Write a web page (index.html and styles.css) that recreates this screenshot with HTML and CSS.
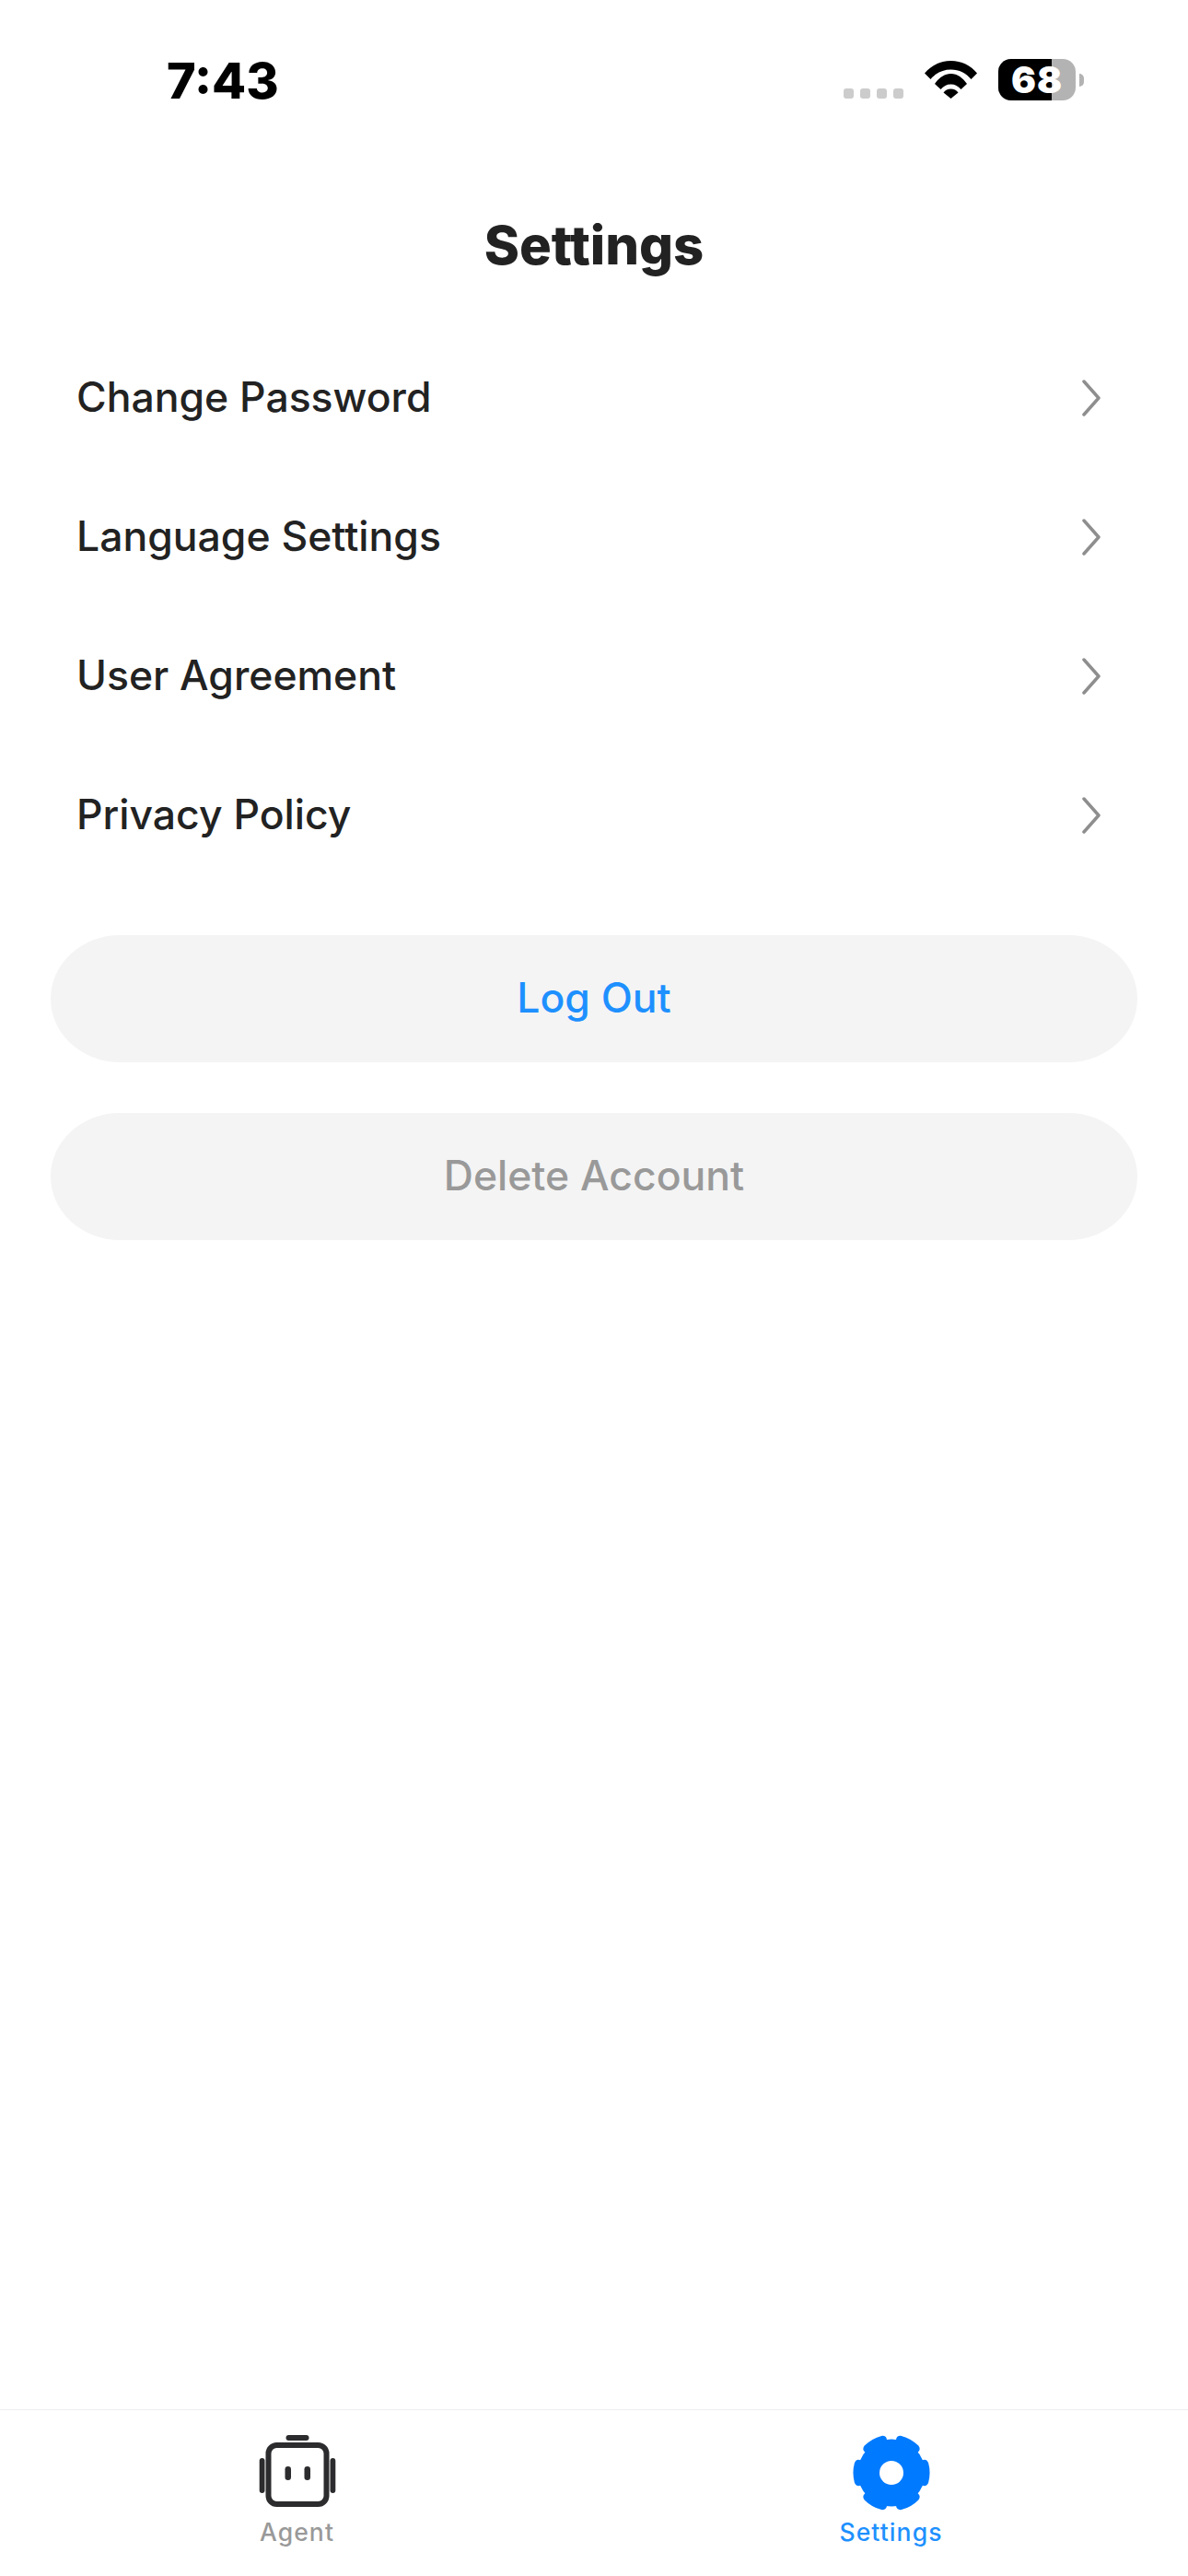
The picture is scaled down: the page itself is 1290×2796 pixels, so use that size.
FILE: index.html
```html
<!DOCTYPE html>
<html lang="en">
<head>
    <meta charset="UTF-8">
    <meta name="viewport" content="width=device-width, initial-scale=1.0">
    <title>Settings</title>
    <link rel="stylesheet" href="styles.css">
</head>
<body>
    <div class="page">
        <!-- Status bar -->
        <div class="status-bar">
            <span class="clock">7:43</span>
            <div class="status-icons">
                <div class="signal">
                    <span></span><span></span><span></span><span></span>
                </div>
                <svg class="wifi" width="57" height="41" viewBox="0 0 57 41">
                    <path d="M0 13.5C7 5 17 0 28.5 0S50 5 57 13.5L50.5 20C45 13.5 37.5 9.5 28.5 9.5S12 13.5 6.500 20Z"/>
                    <path d="M11 25C15.500 18.500 21.500 14 28.500 14S41.500 18.500 46 25L39.500 31C36.500 27.500 33 25.500 28.500 25.500S20.500 27.500 17.500 31Z"/>
                    <path d="M20.500 34.500C22.500 32 25 30.500 28.500 30.500S34.500 32 36.500 34.500L28.500 41Z"/>
                </svg>
                <div class="battery">
                    <div class="battery-body"><span class="battery-level"></span><span class="battery-text">68</span></div>
                    <span class="battery-nub"></span>
                </div>
            </div>
        </div>

        <h1 class="page-title">Settings</h1>

        <!-- Menu -->
        <div class="menu">
            <div class="menu-row">
                <span class="menu-label">Change Password</span>
                <svg class="chevron" width="20" height="40" viewBox="0 0 20 40"><path d="M2 2L18 20L2 38"/></svg>
            </div>
            <div class="menu-row">
                <span class="menu-label">Language Settings</span>
                <svg class="chevron" width="20" height="40" viewBox="0 0 20 40"><path d="M2 2L18 20L2 38"/></svg>
            </div>
            <div class="menu-row">
                <span class="menu-label">User Agreement</span>
                <svg class="chevron" width="20" height="40" viewBox="0 0 20 40"><path d="M2 2L18 20L2 38"/></svg>
            </div>
            <div class="menu-row">
                <span class="menu-label">Privacy Policy</span>
                <svg class="chevron" width="20" height="40" viewBox="0 0 20 40"><path d="M2 2L18 20L2 38"/></svg>
            </div>
        </div>

        <div class="actions">
            <button class="btn btn-logout" type="button">Log Out</button>
            <button class="btn btn-delete" type="button">Delete Account</button>
        </div>

        <!-- Tab bar -->
        <div class="tab-bar">
            <div class="tab">
                <svg class="tab-icon" width="84" height="84" viewBox="0 0 84 84" fill="#2c2c2e">
                    <rect x="29.500" y="1" width="25" height="6" rx="3"/>
                    <rect x="0.700" y="26" width="5.800" height="38" rx="2.900"/>
                    <rect x="77.500" y="26" width="5.800" height="38" rx="2.900"/>
                    <rect x="10.500" y="12" width="63" height="64" rx="9" fill="none" stroke="#2c2c2e" stroke-width="6"/>
                    <rect x="28.500" y="35" width="6.500" height="15" rx="3.200"/>
                    <rect x="49.500" y="35" width="6.500" height="15" rx="3.200"/>
                </svg>
                <span class="tab-label">Agent</span>
            </div>
            <div class="tab tab-active">
                <svg class="tab-icon" width="84" height="84" viewBox="-42 -42 84 84" fill="#007aff">
                    <circle r="36.500"/>
                    <path d="M28 -13.700L33.800 -13.700Q38 -15.400 40.100 -10.700Q43 0 40.100 10.700Q38 15.400 33.800 13.700L28 13.700Z"/>
                    <path d="M28 -13.700L33.800 -13.700Q38 -15.400 40.100 -10.700Q43 0 40.100 10.700Q38 15.400 33.800 13.700L28 13.700Z" transform="rotate(60)"/>
                    <path d="M28 -13.700L33.800 -13.700Q38 -15.400 40.100 -10.700Q43 0 40.100 10.700Q38 15.400 33.800 13.700L28 13.700Z" transform="rotate(120)"/>
                    <path d="M28 -13.700L33.800 -13.700Q38 -15.400 40.100 -10.700Q43 0 40.100 10.700Q38 15.400 33.800 13.700L28 13.700Z" transform="rotate(180)"/>
                    <path d="M28 -13.700L33.800 -13.700Q38 -15.400 40.100 -10.700Q43 0 40.100 10.700Q38 15.400 33.800 13.700L28 13.700Z" transform="rotate(240)"/>
                    <path d="M28 -13.700L33.800 -13.700Q38 -15.400 40.100 -10.700Q43 0 40.100 10.700Q38 15.400 33.800 13.700L28 13.700Z" transform="rotate(300)"/>
                    <circle r="13" fill="#fff"/>
                </svg>
                <span class="tab-label">Settings</span>
            </div>
        </div>
    </div>
</body>
</html>
```

FILE: styles.css
```css
body {
    font-family: Inter, 'Noto Sans', sans-serif;
    background: #fff;
    margin: 0;
    padding: 0;
}
.page {
    display: flex;
    flex-direction: column;
    height: 2796px;
    overflow: hidden;
}
.status-bar {
    display: flex;
    justify-content: space-between;
    align-items: flex-start;
    height: 120px;
    padding: 0 113px 0 181px;
}
.clock {
    margin-top: 56px;
    font-size: 54px;
    line-height: 64px;
    font-weight: 800;
    color: #000;
}
.status-icons {
    display: flex;
    align-items: flex-end;
    margin-top: 64px;
}
.signal {
    display: flex;
    gap: 7px;
    margin: 0 23px 2px 0;
}
.signal span {
    width: 11px;
    height: 11px;
    border-radius: 3px;
    background: #ccc;
}
.wifi {
    margin: 0 23px 2px 0;
}
.battery {
    display: flex;
    align-items: center;
    gap: 4px;
}
.battery-body {
    position: relative;
    display: flex;
    justify-content: center;
    align-items: center;
    width: 84px;
    height: 45px;
    border-radius: 14px;
    background: #b3b3b3;
}
.battery-level {
    position: absolute;
    left: 0;
    top: 0;
    bottom: 0;
    width: 58px;
    border-radius: 14px 0 0 14px;
    background: #000;
}
.battery-text {
    position: relative;
    font-size: 40px;
    line-height: 45px;
    font-weight: 900;
    letter-spacing: 1px;
    color: #fff;
}
.battery-nub {
    width: 5px;
    height: 14px;
    border-radius: 0 7px 7px 0;
    background: #b3b3b3;
}
.page-title {
    margin: 0;
    height: 236px;
    padding-top: 112px;
    box-sizing: border-box;
    text-align: center;
    font-size: 58px;
    line-height: 68px;
    font-weight: 800;
    color: #222;
}
.menu {
    display: flex;
    flex-direction: column;
    padding: 0 61px 0 83px;
}
.menu-row {
    display: flex;
    justify-content: space-between;
    align-items: center;
    height: 151px;
    font-size: 44.5px;
    font-weight: 550;
    color: #222;
}
.menu-label {
    margin-bottom: 2px;
}
.chevron {
    margin-right: 34px;
    fill: none;
    stroke: #8e8e8e;
    stroke-width: 3.5;
    stroke-linecap: round;
    stroke-linejoin: round;
}
.actions {
    display: flex;
    flex-direction: column;
    gap: 55px;
    margin: 55px 55px 0;
}
.btn {
    height: 138px;
    padding: 0 0 2px;
    border: none;
    border-radius: 75px / 69px;
    background: #f4f4f4;
    font-family: inherit;
    font-size: 44.5px;
    font-weight: 550;
}
.btn-logout {
    color: #1e90ff;
}
.btn-delete {
    color: #999;
}
.tab-bar {
    display: flex;
    margin-top: auto;
    height: 180px;
    border-top: 1px solid #eeeef2;
}
.tab {
    flex: 1;
    display: flex;
    flex-direction: column;
    align-items: center;
    padding-top: 26px;
}
.tab-label {
    margin-top: 6px;
    font-size: 26.5px;
    line-height: 32px;
    font-weight: 500;
    letter-spacing: 1.1px;
    color: #999;
}
.tab-active .tab-label {
    color: #1e90ff;
}
```
